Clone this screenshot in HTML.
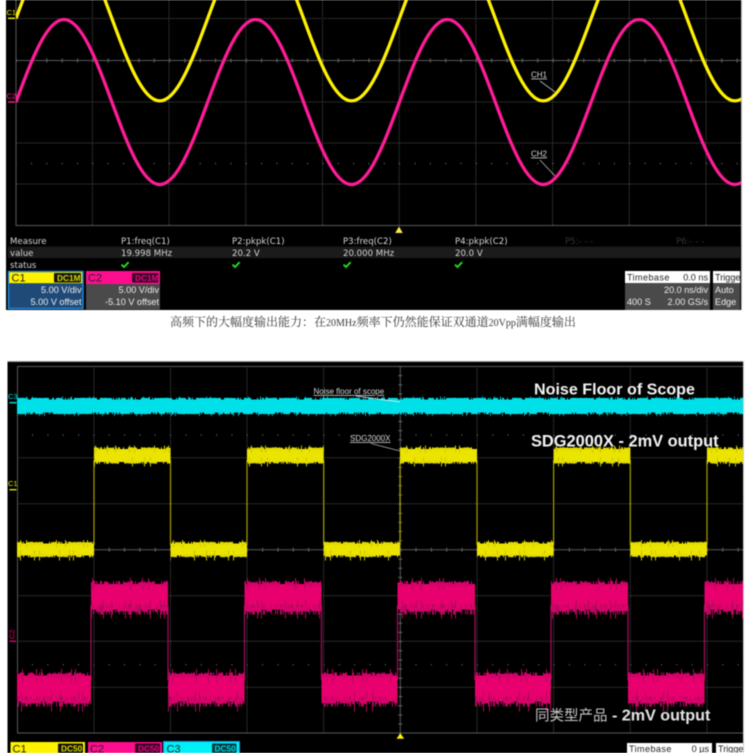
<!DOCTYPE html>
<html>
<head>
<meta charset="utf-8">
<title>Scope</title>
<style>
html,body{margin:0;padding:0;background:#fff;width:750px;height:753px;overflow:hidden}
svg{display:block;filter:blur(.42px)}
text{font-family:"Liberation Sans","Noto Sans CJK SC",sans-serif}
.m{font-family:"DejaVu Sans",sans-serif;font-size:8.6px;fill:#d6d6d6}
.s{font-size:9.1px;fill:#eee}
.tag{font-size:8.5px;font-weight:bold}
.hd{font-size:11px;fill:#222}
.dot{stroke:#4e4e4e;stroke-width:1;stroke-dasharray:1 1;fill:none}
.solid{stroke:#5a5a5a;stroke-width:1;fill:none}
.n{fill:none}
.a{stroke-dasharray:1 2 1 1 2 3 1 4 1 1 3 2 1 5 2 1 1 3 2 2 1 1 1 6}
.b{stroke-dasharray:1 7 1 13 1 4 1 19 1 9 1 3 1 23 1 11}
.c{stroke-dasharray:1 2 2 1 1 4 1 1 3 3 1 2 1 1 2 6 1 3 1 1}
.d{stroke-dasharray:1 11 1 5 1 29 1 8 1 17 1 3 1 37}
.e{stroke-dasharray:9 5 17 8 6 12 23 4 11 9 5 15}
.lbl{font-size:8px;fill:#d8d8d8;text-decoration:underline}
.big{font-size:16.1px;font-weight:bold;fill:#f2f2f2}
</style>
</head>
<body>
<svg width="750" height="753" viewBox="0 0 750 753" xmlns="http://www.w3.org/2000/svg">
<defs>
<clipPath id="top"><rect x="16" y="0" width="725" height="226"/></clipPath>
<clipPath id="yh"><path d="M94 430H170.5V480H94ZM247 430H323.7V480H247ZM400 430H477V480H400ZM553.6 430H630.3V480H553.6ZM707 430H743V480H707Z"/></clipPath>
<clipPath id="yl"><path d="M17 525H94V575H17ZM170.5 525H247V575H170.5ZM323.7 525H400V575H323.7ZM477 525H553.6V575H477ZM630.3 525H707V575H630.3Z"/></clipPath>
<clipPath id="ph"><path d="M91 565H168V630H91ZM244.5 565H321.5V630H244.5ZM397.5 565H475V630H397.5ZM551 565H628V630H551ZM704.5 565H743V630H704.5Z"/></clipPath>
<clipPath id="pl"><path d="M17 655H91V725H17ZM168 655H244.5V725H168ZM321.5 655H397.5V725H321.5ZM475 655H551V725H475ZM628 655H704.5V725H628Z"/></clipPath>
<clipPath id="trg1"><rect x="713" y="271" width="27" height="40"/></clipPath>
<clipPath id="trg2"><rect x="715" y="741" width="28" height="12"/></clipPath>
<path id="sine" fill="none" stroke-width="3.3" d="M16 102c15.63 -42.26 30.58 -82.5 47.93 -82.5c17.35 0 32.3 40.24 47.93 82.5c15.63 42.26 30.58 82.5 47.93 82.5c17.35 0 32.3 -40.24 47.93 -82.5c15.63 -42.26 30.58 -82.5 47.93 -82.5c17.35 0 32.3 40.24 47.93 82.5c15.63 42.26 30.58 82.5 47.93 82.5c17.35 0 32.3 -40.24 47.93 -82.5c15.63 -42.26 30.58 -82.5 47.93 -82.5c17.35 0 32.3 40.24 47.93 82.5c15.63 42.26 30.58 82.5 47.93 82.5c17.35 0 32.3 -40.24 47.93 -82.5c15.63 -42.26 30.58 -82.5 47.93 -82.5c17.35 0 32.3 40.24 47.93 82.5c15.63 42.26 30.58 82.5 47.93 82.5c17.35 0 32.3 -40.24 47.93 -82.5"/>
</defs>

<rect width="750" height="753" fill="#fff"/>

<!-- ===== TOP SCOPE ===== -->
<rect x="6" y="0" width="735" height="310" fill="#000"/>
<rect x="741" y="0" width="1" height="310" fill="#bbb"/>
<!-- grid -->
<path class="dot" d="M92.4 0V225M169 0V225M245.8 0V225M322.5 0V225M475.9 0V225M552.6 0V225M629.3 0V225M706 0V225"/>
<path class="dot" d="M399.2 0V225"/>
<path class="dot" d="M16 18.5H741M16 102H741M16 143H741M16 184H741"/>
<path class="solid" d="M16 0V225.5H741"/>
<path class="solid" d="M16 60.5H741"/>
<path d="M16 60.5H741" fill="none" stroke="#666" stroke-width="4" stroke-dasharray="1 14.34" stroke-dashoffset="-15"/>
<path d="M16 163.5H741" fill="none" stroke="#5c5c5c" stroke-width="1.4" stroke-dasharray="1 14.34" stroke-dashoffset="-15"/>
<!-- traces -->
<g clip-path="url(#top)">
  <use href="#sine" stroke="#fff200" transform="translate(0,-83.6)"/>
  <use href="#sine" stroke="#ff1c97"/>
</g>
<!-- channel markers -->
<text x="6.5" y="15" fill="#e8e800" style="font-size:7.5px">C1</text>
<rect x="8" y="17.6" width="7" height="1.4" fill="#fff200"/>
<text x="6.5" y="98.5" style="font-size:7.5px" fill="#ff1c97">C2</text>
<rect x="8" y="101.3" width="7" height="1.4" fill="#ff1c97"/>
<!-- annotations -->
<text x="531" y="77.5" class="lbl">CH1</text>
<text x="531" y="156.5" class="lbl">CH2</text>
<path d="M540 81L555 92M540 160L555 176" stroke="#bbb" stroke-width=".8" fill="none"/>
<path d="M395.2 233L399 226.5L402.8 233Z" fill="#ffe94a"/>

<!-- measure table -->
<rect x="8" y="246.6" width="732" height="11.4" fill="#1b1b1b"/>
<text x="10" y="244" class="m">Measure</text>
<text x="121" y="244" class="m">P1:freq(C1)</text>
<text x="232" y="244" class="m">P2:pkpk(C1)</text>
<text x="343" y="244" class="m">P3:freq(C2)</text>
<text x="455" y="244" class="m">P4:pkpk(C2)</text>
<text x="565" y="244" class="m" style="fill:#333">P5:- - -</text>
<text x="676" y="244" class="m" style="fill:#333">P6:- - -</text>
<text x="10" y="256" class="m">value</text>
<text x="121" y="256" class="m">19.998 MHz</text>
<text x="232" y="256" class="m">20.2 V</text>
<text x="343" y="256" class="m">20.000 MHz</text>
<text x="455" y="256" class="m">20.0 V</text>
<text x="10" y="268" class="m">status</text>
<g fill="none" stroke="#22dd22" stroke-width="1.9">
<path d="M121.5 264.6L124 267L128.6 262.2"/>
<path d="M232.5 264.6L235 267L239.6 262.2"/>
<path d="M343.5 264.6L346 267L350.6 262.2"/>
<path d="M455 264.6L457.5 267L462.1 262.2"/>
</g>
<!-- C1 -->
<rect x="8.5" y="271.5" width="74.5" height="37" fill="#1f4a78" stroke="#1e8ce0" stroke-width="1.4"/>
<rect x="9.2" y="272.2" width="73" height="11" fill="#fff200"/>
<text x="11.5" y="281.5" class="hd">C1</text>
<rect x="54" y="273" width="27" height="9.5" rx="1" fill="#14140a"/>
<text x="57" y="281" class="tag" fill="#d8d800" style="font-size:8.3px">DC1M</text>
<text x="81.5" y="293" class="s" text-anchor="end">5.00 V/div</text>
<text x="81.5" y="305" class="s" text-anchor="end">5.00 V offset</text>
<!-- C2 -->
<rect x="86" y="271" width="74" height="13" fill="#ff0d8f"/>
<rect x="86" y="284" width="74" height="25.5" fill="#4a4a4a"/>
<text x="88" y="281.5" class="hd">C2</text>
<rect x="132" y="273" width="26.5" height="9.5" rx="1" fill="#3a0022"/>
<text x="135" y="281" class="tag" fill="#e00a80" style="font-size:8.3px">DC1M</text>
<text x="159" y="293" class="s" text-anchor="end">5.00 V/div</text>
<text x="159" y="305" class="s" text-anchor="end">-5.10 V offset</text>
<!-- Timebase -->
<rect x="625" y="271" width="85" height="12" fill="#fff"/>
<rect x="625" y="283" width="85" height="27" fill="#4a4a4a"/>
<text x="627" y="280.5" class="s" style="fill:#222;letter-spacing:.4px">Timebase</text>
<text x="708" y="280.5" class="s" text-anchor="end" style="fill:#222">0.0 ns</text>
<text x="708" y="293" class="s" text-anchor="end">20.0 ns/div</text>
<text x="627" y="305" class="s">400 S</text>
<text x="708" y="305" class="s" text-anchor="end">2.00 GS/s</text>
<g clip-path="url(#trg1)">
<rect x="713" y="271" width="27" height="12" fill="#fff"/>
<rect x="713" y="283" width="27" height="27" fill="#4a4a4a"/>
<text x="715" y="280.5" class="s" style="fill:#222">Trigger</text>
<text x="715" y="293" class="s">Auto</text>
<text x="715" y="305" class="s">Edge</text>
</g>

<!-- caption -->
<text x="170" y="326" style="font-family:'Noto Serif CJK SC','Liberation Serif',serif;font-size:12px;fill:#3a3a3a">高频下的大幅度输出能力：在<tspan style="font-family:'Liberation Serif',serif;font-size:10px">20MHz</tspan>频率下仍然能保证双通道<tspan style="font-family:'Liberation Serif',serif;font-size:10px">20Vpp</tspan>满幅度输出</text>

<!-- ===== BOTTOM SCOPE ===== -->
<rect x="7.5" y="361" width="735.5" height="392" fill="#000"/>
<rect x="7.5" y="361" width="735.5" height="1" fill="#999"/>
<rect x="743" y="361" width="1" height="392" fill="#ccc"/>
<!-- grid -->
<path class="dot" d="M94 366V733M170.5 366V733M247 366V733M323.7 366V733M477 366V733M553.6 366V733M630.3 366V733M707 366V733"/>
<path class="dot" d="M17 412H743M17 457.7H743M17 503.7H743M17 595.7H743M17 641.3H743M17 687.3H743"/>
<path class="solid" d="M743 366.5H17.5V733H743"/>
<path class="solid" d="M17 549.7H743M400.3 366V733"/>
<path d="M17 549.7H743" fill="none" stroke="#666" stroke-width="4" stroke-dasharray="1 14.34" stroke-dashoffset="-15"/>
<path d="M400.3 366V733" fill="none" stroke="#666" stroke-width="4" stroke-dasharray="1 8.17"/>
<path d="M17 435H743M17 664.7H743" fill="none" stroke="#5c5c5c" stroke-width="1.4" stroke-dasharray="1 14.34" stroke-dashoffset="-15"/>

<!-- cyan trace -->
<g class="n" stroke="#00a8b0">
<path class="d" stroke-width="7" d="M17 400H743" stroke-dashoffset="3"/>
<path class="b" stroke-width="8" d="M17 412H743"/>
</g>
<g class="n" stroke="#00dfe6">
<path class="a" stroke-width="3.6" d="M17 399.5H743"/>
<path class="c" stroke-width="3.6" d="M17 412.5H743"/>
<path class="e" stroke-width="3" d="M17 399.5H743"/>
<path class="e" stroke-width="3" d="M17 412.5H743" stroke-dashoffset="21"/>
</g>
<rect x="17" y="399.5" width="726" height="13" fill="#00e0e8"/>

<!-- yellow verticals -->
<path d="M94 460V545M170.5 460V545M247 460V545M323.7 460V545M400 460V545M477 460V545M553.6 460V545M630.3 460V545M707 460V545" stroke="#a69e00" stroke-width="1.2" fill="none"/>
<!-- yellow trace -->
<g clip-path="url(#yh)">
<rect x="17" y="449" width="726" height="13" fill="#ebe400"/>
<g class="n" stroke="#c8c200">
<path class="b" stroke-width="7" d="M17 449H743" stroke-dashoffset="7"/>
<path class="d" stroke-width="9" d="M17 462H743" stroke-dashoffset="2"/>
</g>
<g class="n" stroke="#e4dc00">
<path class="a" stroke-width="3.4" d="M17 449H743"/>
<path class="c" stroke-width="3.6" d="M17 462H743"/>
<path class="e" stroke-width="2.6" d="M17 449H743" stroke-dashoffset="13"/>
<path class="e" stroke-width="2.6" d="M17 462H743" stroke-dashoffset="31"/>
</g>
</g>
<g clip-path="url(#yl)">
<rect x="17" y="543.5" width="726" height="12" fill="#ebe400"/>
<g class="n" stroke="#c8c200">
<path class="d" stroke-width="7" d="M17 543.5H743" stroke-dashoffset="9"/>
<path class="b" stroke-width="10" d="M17 555.5H743" stroke-dashoffset="5"/>
</g>
<g class="n" stroke="#e4dc00">
<path class="c" stroke-width="3.4" d="M17 543.5H743"/>
<path class="a" stroke-width="3.6" d="M17 555.5H743" stroke-dashoffset="4"/>
<path class="e" stroke-width="2.6" d="M17 543.5H743" stroke-dashoffset="5"/>
<path class="e" stroke-width="2.6" d="M17 555.5H743" stroke-dashoffset="44"/>
</g>
</g>

<!-- pink verticals -->
<path d="M91 605V680M168 605V680M244.5 605V680M321.5 605V680M397.5 605V680M475 605V680M551 605V680M628 605V680M704.5 605V680" stroke="#a30c55" stroke-width="1.3" fill="none"/>
<!-- pink trace -->
<g clip-path="url(#ph)">
<rect x="17" y="584" width="726" height="25.5" fill="#e8006e"/>
<g class="n" stroke="#b00a58">
<path class="d" stroke-width="12" d="M17 584H743" stroke-dashoffset="4"/>
<path class="b" stroke-width="18" d="M17 609.5H743" stroke-dashoffset="11"/>
<path class="c" stroke-width="10" d="M17 609.5H743" stroke-dashoffset="6"/>
</g>
<g class="n" stroke="#d4026a">
<path class="a" stroke-width="6" d="M17 584H743"/>
<path class="c" stroke-width="5" d="M17 609.5H743"/>
<path class="e" stroke-width="3.6" d="M17 584H743" stroke-dashoffset="17"/>
<path class="e" stroke-width="3.6" d="M17 609.5H743" stroke-dashoffset="38"/>
</g>
</g>
<g clip-path="url(#pl)">
<rect x="17" y="675.5" width="726" height="26" fill="#e8006e"/>
<g class="n" stroke="#b00a58">
<path class="b" stroke-width="13" d="M17 675.5H743" stroke-dashoffset="3"/>
<path class="d" stroke-width="20" d="M17 701.5H743" stroke-dashoffset="14"/>
<path class="a" stroke-width="10" d="M17 701.5H743" stroke-dashoffset="9"/>
</g>
<g class="n" stroke="#d4026a">
<path class="c" stroke-width="6" d="M17 675.5H743"/>
<path class="a" stroke-width="5" d="M17 701.5H743" stroke-dashoffset="6"/>
<path class="e" stroke-width="3.6" d="M17 675.5H743" stroke-dashoffset="27"/>
<path class="e" stroke-width="3.6" d="M17 701.5H743" stroke-dashoffset="9"/>
</g>
</g>

<!-- channel markers -->
<text x="8" y="399" style="font-size:7.5px" fill="#00d8e0">C3</text>
<rect x="9.5" y="402" width="7" height="1.4" fill="#00e0e8"/>
<text x="8" y="486" style="font-size:7.5px" fill="#e8e000">C1</text>
<rect x="9.5" y="489" width="7" height="1.4" fill="#e8e000"/>
<text transform="translate(14.5,639) rotate(-90)" style="font-size:7.5px" fill="#e8006e">C2</text>
<rect x="9.5" y="640.5" width="6.5" height="1.4" fill="#e8006e"/>

<!-- annotations -->
<text x="313.5" y="394" class="lbl">Noise floor of scope</text>
<path d="M356 396L400 402" stroke="#eee" stroke-width=".8" fill="none"/>
<text x="350" y="441" class="lbl">SDG2000X</text>
<path d="M371 443.5L400 451" stroke="#aaa" stroke-width=".8" fill="none"/>
<text x="534" y="394.5" class="big">Noise Floor of Scope</text>
<text x="531" y="446.5" class="big" style="font-size:16.4px">SDG2000X - 2mV output</text>
<text x="535" y="720.5" class="big" style="fill:#e4e4e4"><tspan style="font-weight:normal;font-family:'Noto Sans CJK SC',sans-serif;font-size:14.5px;fill:#c8c8c8">同类型产品</tspan> - 2mV output</text>
<path d="M397 738.5L400.3 733.5L403.6 738.5Z" fill="#fff200" stroke="#fff200" stroke-width=".6"/>

<!-- bottom channels -->
<rect x="10.5" y="742" width="74.5" height="11" fill="#fff200"/>
<text x="12.5" y="752.5" class="hd">C1</text>
<rect x="58" y="743.5" width="25" height="9.5" rx="1" fill="#14140a"/>
<text x="61" y="751.5" class="tag" fill="#d8d800" style="font-size:8.3px">DC50</text>

<rect x="88" y="742" width="74" height="11" fill="#ff0d8f"/>
<text x="90" y="752.5" class="hd">C2</text>
<rect x="135" y="743.5" width="25" height="9.5" rx="1" fill="#3a0022"/>
<text x="138" y="751.5" class="tag" fill="#e00a80" style="font-size:8.3px">DC50</text>

<rect x="164" y="742" width="75" height="11" fill="#00f0f8"/>
<rect x="163.5" y="741.5" width="76" height="12" fill="none" stroke="#1e8ce0" stroke-width="1"/>
<text x="166.5" y="752.5" class="hd">C3</text>
<rect x="212" y="743.5" width="24.5" height="9.5" rx="1" fill="#003a3e"/>
<text x="214.5" y="751.5" class="tag" fill="#00d8e0" style="font-size:8.3px">DC50</text>

<rect x="627" y="743" width="85" height="10" fill="#fff"/>
<text x="629" y="752" class="s" style="fill:#222;letter-spacing:.4px">Timebase</text>
<text x="709" y="752" class="s" text-anchor="end" style="fill:#222">0 µs</text>
<g clip-path="url(#trg2)">
<rect x="716" y="743" width="27" height="10" fill="#fff"/>
<text x="718" y="752" class="s" style="fill:#222">Trigger</text>
</g>
</svg>
</body>
</html>
